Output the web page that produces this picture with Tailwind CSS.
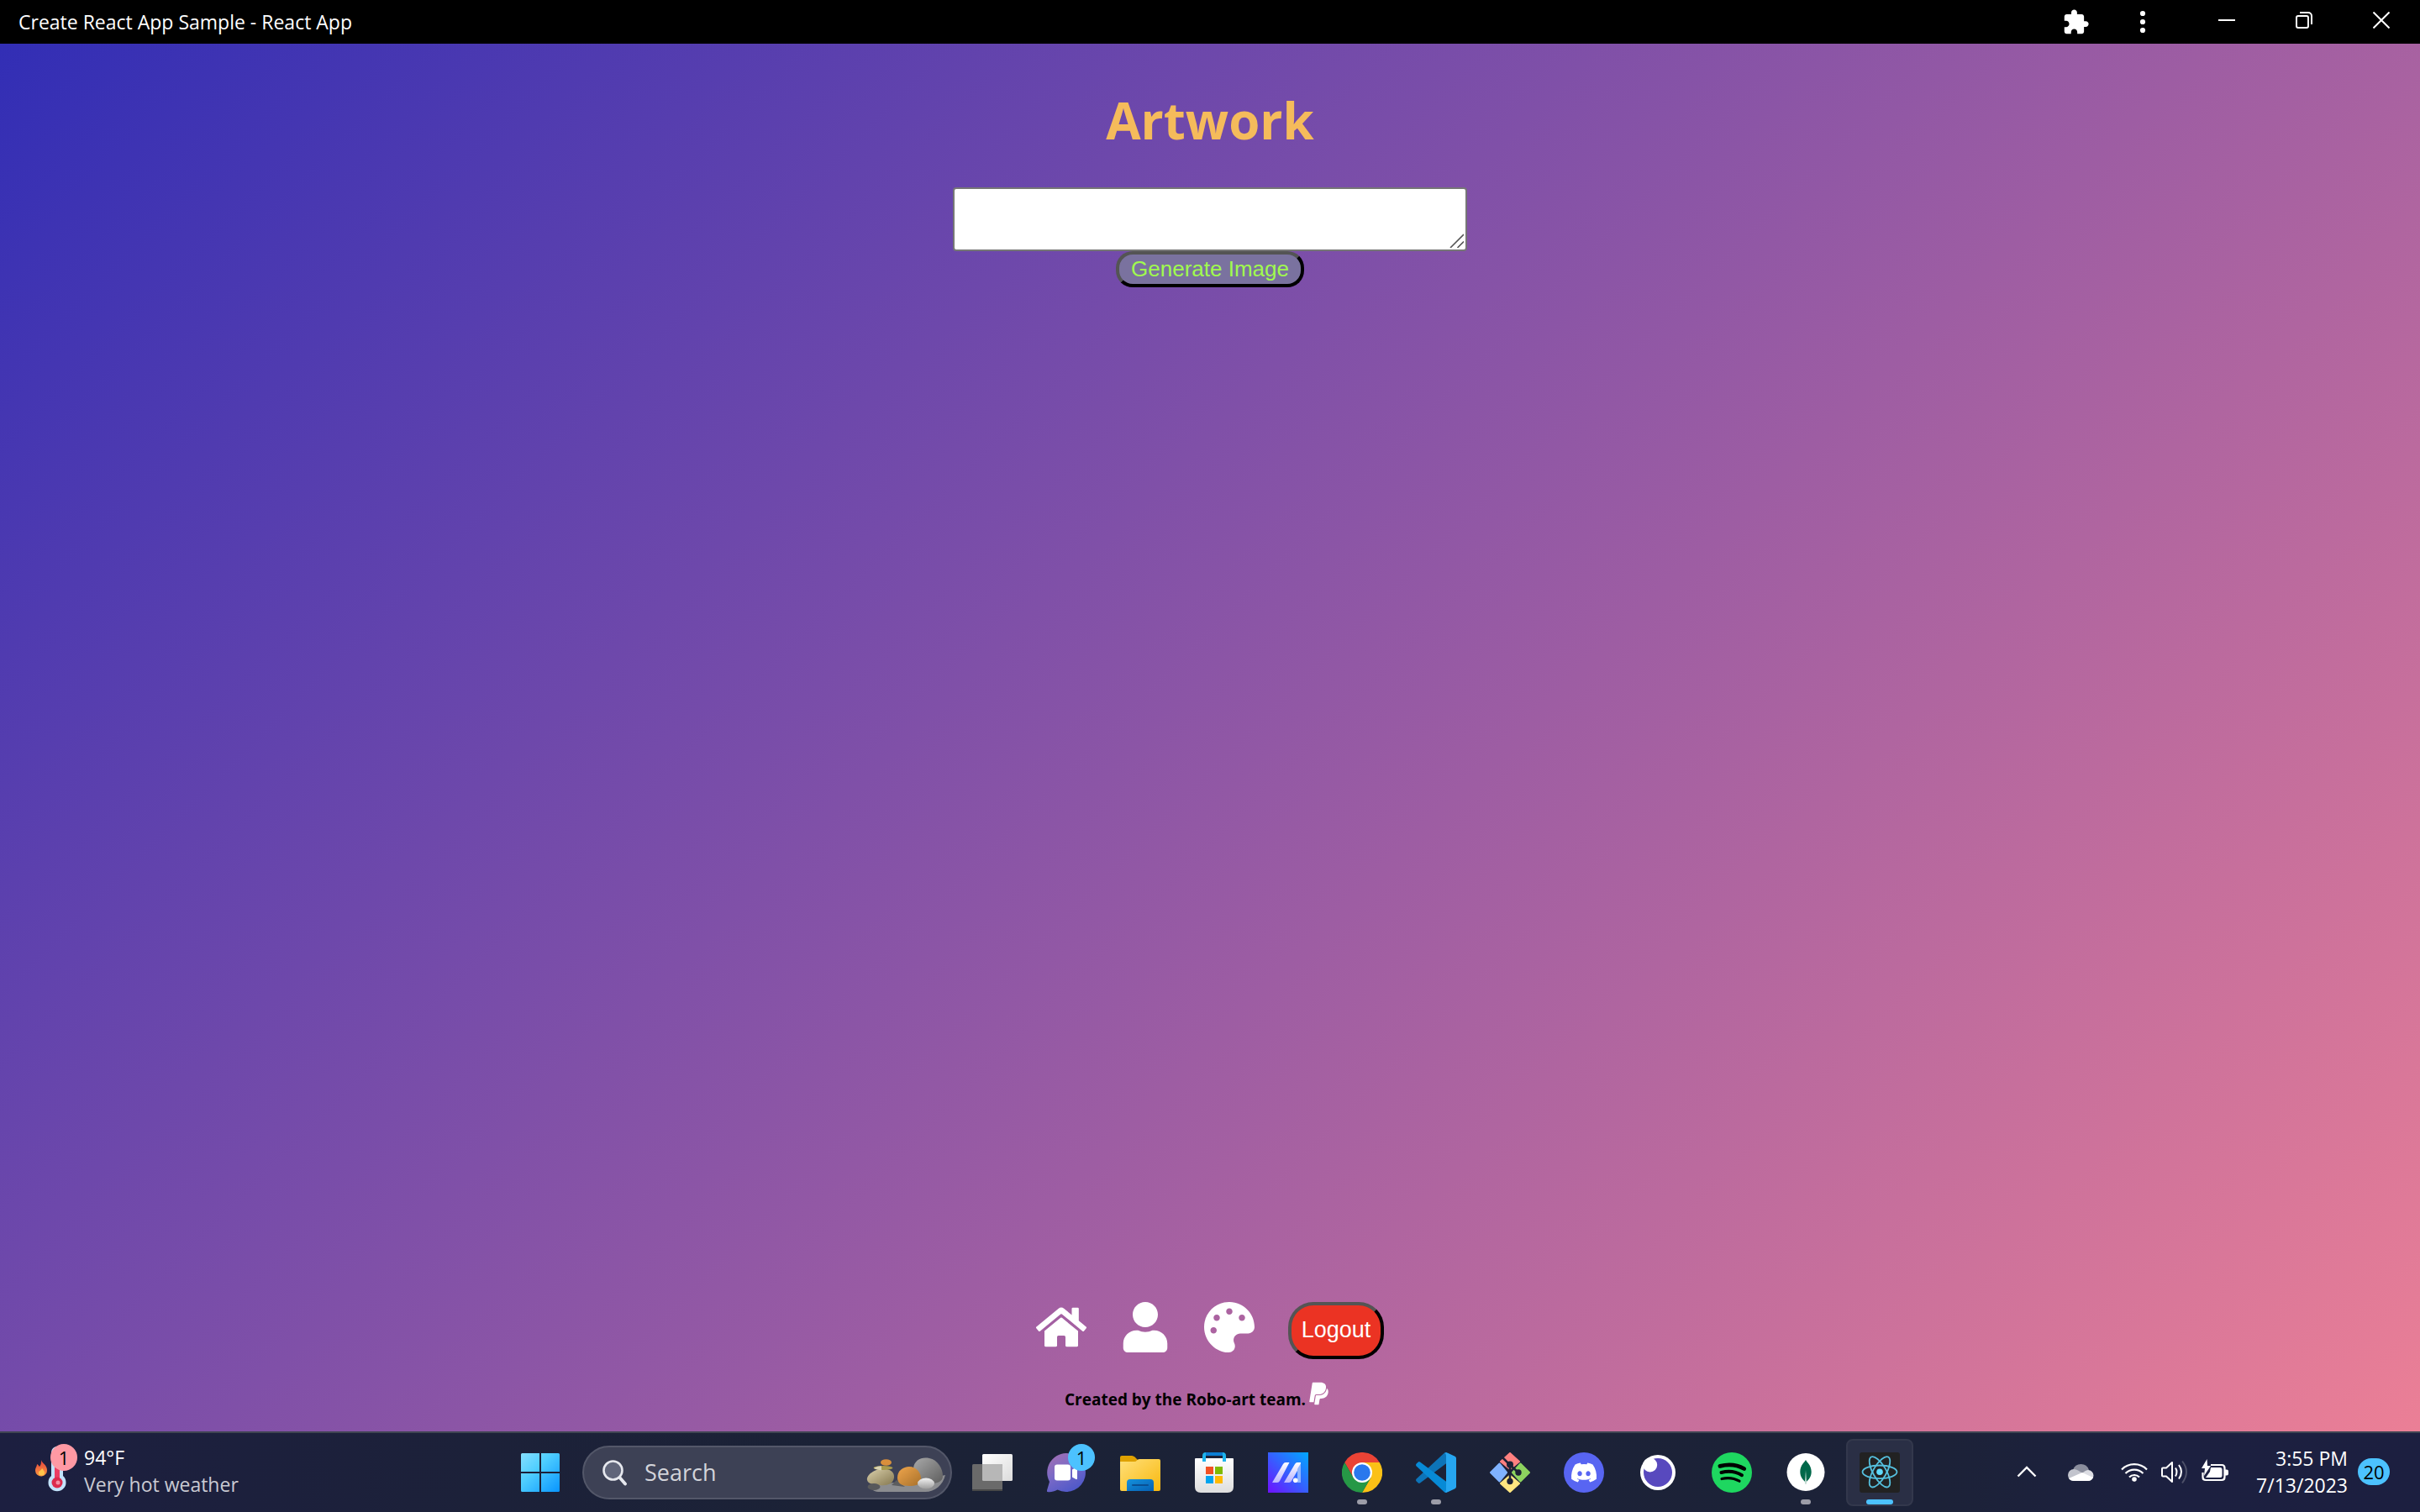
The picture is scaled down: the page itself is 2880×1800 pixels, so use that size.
<!DOCTYPE html>
<html lang="en">
<head>
<meta charset="utf-8">
<meta name="viewport" content="width=device-width, initial-scale=1">
<title>Create React App Sample - React App</title>
<script src="https://cdn.jsdelivr.net/npm/@tailwindcss/browser@4"></script>
</head>
<body class="flex min-h-screen flex-col bg-black font-['Open_Sans','Noto_Sans',sans-serif]">

<!-- Window title bar -->
<header class="flex h-[52px] shrink-0 items-center justify-between bg-black pl-[22px] text-white">
  <span class="text-[23px] leading-8">Create React App Sample - React App</span>
  <div class="flex h-full items-stretch">
    <button aria-label="Extensions" class="flex w-20 items-center justify-center">
      <svg class="size-[33px]" viewBox="0 0 24 24" fill="currentColor"><path d="M20.500 11H19V7c0-1.100-.9-2-2-2h-4V3.500C13 2.120 11.880 1 10.500 1S8 2.120 8 3.500V5H4c-1.100 0-1.990.9-1.990 2v3.800H3.500c1.490 0 2.700 1.210 2.700 2.700s-1.210 2.700-2.700 2.700H2V20c0 1.100.9 2 2 2h3.800v-1.500c0-1.490 1.210-2.700 2.700-2.700 1.490 0 2.700 1.210 2.700 2.700V22H17c1.100 0 2-.9 2-2v-4h1.500c1.380 0 2.500-1.120 2.500-2.500S21.880 11 20.500 11z"/></svg>
    </button>
    <button aria-label="Menu" class="mr-[14px] flex w-20 items-center justify-center">
      <svg class="h-8 w-2" viewBox="0 0 8 32" fill="currentColor"><circle cx="4" cy="6" r="3.100"/><circle cx="4" cy="16" r="3.100"/><circle cx="4" cy="26" r="3.100"/></svg>
    </button>
    <button aria-label="Minimize" class="flex w-[92px] items-center justify-center pb-1">
      <svg class="size-5" viewBox="0 0 20 20" stroke="currentColor" stroke-width="2"><path d="M0 10h20"/></svg>
    </button>
    <button aria-label="Restore" class="flex w-[92px] items-center justify-center pb-1">
      <svg class="size-5" viewBox="0 0 20 20" fill="none" stroke="currentColor" stroke-width="2"><rect x="1" y="5" width="14" height="14" rx="2"/><path d="M5 1h10a4 4 0 0 1 4 4v10"/></svg>
    </button>
    <button aria-label="Close" class="flex w-[92px] items-center justify-center pb-1">
      <svg class="size-5" viewBox="0 0 20 20" stroke="currentColor" stroke-width="2"><path d="M.5.5l19 19M19.500.5l-19 19"/></svg>
    </button>
  </div>
</header>

<!-- App -->
<main class="flex flex-1 flex-col items-center justify-between bg-[linear-gradient(135deg,#322eb5_0%,#eb7f96_100%)] pt-12 pb-5">
  <section class="flex flex-col items-center">
    <h1 class="text-[60px] leading-[86px] font-bold text-[#f5bb5b]">Artwork</h1>
    <div class="relative mt-[37px] flex">
      <textarea aria-label="Image prompt" class="h-[76px] w-[612px] resize-none rounded-sm border-2 border-[#767676] bg-white p-1 text-[27px] text-black"></textarea>
      <svg class="pointer-events-none absolute right-1 bottom-1 size-5" viewBox="0 0 20 20" fill="none" stroke="#555" stroke-width="1.600"><path d="M4 20L20 4M12.500 20l7.500-7.500"/></svg>
    </div>
    <button class="h-[43px] rounded-[20px] border-4 border-black bg-[#7a729f] px-[14px] pb-[2px] font-['Liberation_Sans',Arial,sans-serif] text-[26px] leading-8 text-[#a0fa4e] [border-style:outset]">Generate Image</button>
  </section>
  <footer class="flex flex-col items-center">
    <nav class="flex items-start gap-10 text-white">
      <a href="#home" aria-label="Home"><svg class="size-[60px]" viewBox="0 0 576 512" fill="currentColor"><path d="M280.370 148.260L96 300.110V464a16 16 0 0 0 16 16l112.060-.29a16 16 0 0 0 15.920-16V368a16 16 0 0 1 16-16h64a16 16 0 0 1 16 16v95.640a16 16 0 0 0 16 16.050L464 480a16 16 0 0 0 16-16V300L295.670 148.260a12.190 12.190 0 0 0-15.300 0zM571.600 251.470L488 182.560V44.050a12 12 0 0 0-12-12h-56a12 12 0 0 0-12 12v72.610L318.470 43a48 48 0 0 0-61 0L4.340 251.470a12 12 0 0 0-1.600 16.900l25.500 31A12 12 0 0 0 45.150 301l235.220-193.740a12.190 12.190 0 0 1 15.300 0L530.900 301a12 12 0 0 0 16.900-1.600l25.500-31a12 12 0 0 0-1.700-16.930z"/></svg></a>
      <a href="#profile" aria-label="Profile"><svg class="size-[60px]" viewBox="0 0 448 512" fill="currentColor"><path d="M224 256c70.700 0 128-57.300 128-128S294.700 0 224 0 96 57.300 96 128s57.300 128 128 128zm89.600 32h-16.700c-22.200 10.200-46.900 16-72.900 16s-50.600-5.800-72.900-16h-16.700C60.200 288 0 348.200 0 422.400V464c0 26.500 21.500 48 48 48h352c26.500 0 48-21.500 48-48v-41.600c0-74.200-60.200-134.400-134.400-134.400z"/></svg></a>
      <a href="#artwork" aria-label="Artwork"><svg class="size-[60px]" viewBox="0 0 512 512" fill="currentColor"><path d="M204.300 5C104.900 24.400 24.800 104.300 5.200 203.400c-37 187 131.700 326.400 258.800 306.700 41.200-6.400 61.400-54.600 42.500-91.700-23.100-45.400 9.900-98.400 60.900-98.400h79.700c35.800 0 64.800-29.600 64.900-65.300C511.500 97.100 368.100-26.900 204.300 5zM96 320c-17.700 0-32-14.300-32-32s14.300-32 32-32 32 14.300 32 32-14.300 32-32 32zm32-128c-17.700 0-32-14.300-32-32s14.300-32 32-32 32 14.300 32 32-14.300 32-32 32zm128-64c-17.700 0-32-14.300-32-32s14.300-32 32-32 32 14.300 32 32-14.300 32-32 32zm128 64c-17.700 0-32-14.300-32-32s14.300-32 32-32 32 14.300 32 32-14.300 32-32 32z"/></svg></a>
      <button class="h-[68px] rounded-[30px] border-4 border-black bg-[#eb3323] px-3 pb-[2px] font-['Liberation_Sans',Arial,sans-serif] text-[27px] leading-8 text-white [border-style:outset]">Logout</button>
    </nav>
    <div class="mt-[26px] flex items-start gap-1 pr-8">
      <p class="pt-1 text-[19px] leading-9 font-bold text-black">Created by the Robo-art team.</p>
      <a href="#paypal" aria-label="PayPal" class="text-white"><svg class="h-[30px] w-[23px]" viewBox="0 0 384 512" fill="currentColor"><path d="M111.400 295.900c-3.500 19.200-17.400 108.700-21.500 134-.3 1.800-1 2.500-3 2.500H12.300c-7.600 0-13.100-6.600-12.100-13.900L58.800 46.600c1.500-9.600 10.100-16.900 20-16.900 152.300 0 165.100-3.700 204 11.400 60.100 23.300 65.600 79.500 44 140.300-21.500 62.600-72.500 89.500-140.100 90.300-43.400.7-69.500-7-75.300 24.200zM357.100 152c-1.800-1.300-2.500-1.800-3 1.300-2 11.400-5.100 22.500-8.800 33.600-39.900 113.800-150.500 103.900-204.500 103.900-6.100 0-10.100 3.300-10.900 9.400-22.600 140.400-27.100 169.700-27.100 169.700-1 7.100 3.500 12.900 10.600 12.900h63.500c8.600 0 15.700-6.300 17.400-14.900.7-5.400-1.100 6.100 14.400-91.300 4.600-22 14.300-19.700 29.300-19.700 71 0 126.400-28.800 142.900-112.300 6.500-34.800 4.600-71.400-23.800-92.600z"/></svg></a>
    </div>
  </footer>
</main>

<!-- Taskbar -->
<div class="grid h-24 shrink-0 grid-cols-[1fr_auto_1fr] items-stretch border-t-2 border-[#404553] bg-[linear-gradient(90deg,#1c1f40_0%,#1c2139_20%,#1b2236_35%,#1c2238_80%,#1c2040_90%,#1c1f40_100%)] text-white">

  <button class="flex items-center gap-3 justify-self-start pb-1 pl-[38px] text-left">
    <span class="relative block h-[60px] w-[50px]">
      <svg class="size-full" viewBox="0 0 50 60">
        <defs><linearGradient id="fl" x1="0" y1="0" x2="0" y2="1"><stop offset="0" stop-color="#e5403e"/><stop offset="1" stop-color="#fb9a3f"/></linearGradient></defs>
        <path d="M11 17c1 4 7 6 7 12a7 7 0 0 1-14 1c0-4 2-5 2-8 2 1 2 2 3 3 2-2 2-5 2-8z" fill="url(#fl)"/><path d="M12 27c2 2 3 4 3 5a3.500 3.500 0 0 1-7 0c0-2 3-2 4-5z" fill="#ffc54a"/>
        <path d="M23 36V8a7 7 0 0 1 14 0v28a10.500 10.500 0 1 1-14 0z" fill="#c3e3fb"/><path d="M27 14h6v30h-6z" fill="#ec3d63"/><circle cx="30" cy="44" r="6.500" fill="#dc2b4d"/><circle cx="31" cy="44" r="2.500" fill="#f58fa4"/>
      </svg>
      <span class="absolute -top-[2px] left-[22px] flex size-8 items-center justify-center rounded-full bg-[#ff99a4] text-[22px] leading-none text-black">1</span>
    </span>
    <span class="text-[23px] leading-8"><span class="block">94°F</span><span class="block text-[#c9cad2]">Very hot weather</span></span>
  </button>

  <div class="flex items-center">
    <button aria-label="Start" class="flex w-[88px] items-center justify-center">
      <svg class="size-[46px]" viewBox="0 0 46 46"><defs><linearGradient id="wn" x1="0" y1="0" x2="46" y2="46" gradientUnits="userSpaceOnUse"><stop offset="0" stop-color="#86e0ff"/><stop offset=".4" stop-color="#4fceff"/><stop offset="1" stop-color="#0895ff"/></linearGradient></defs><path fill="url(#wn)" d="M1.500 0H22v22H0V1.500Q0 0 1.500 0zM24 0h20.500Q46 0 46 1.500V22H24zM0 24h22v22H1.500Q0 46 0 44.500zM24 24h22v20.500q0 1.500-1.500 1.500H24z"/></svg>
    </button>
    <label class="mr-1 ml-[6px] flex h-16 w-[440px] items-center rounded-full border-2 border-[#535769] bg-[#3d4155] pr-1 pl-[22px]">
      <svg class="h-8 w-[30px] shrink-0" viewBox="0 0 30 32" fill="none" stroke="#e6e8ee" stroke-linecap="round"><circle cx="12.500" cy="13.500" r="11" stroke-width="2.600" fill="#60657a"/><path d="M20.500 22l6.500 7.500" stroke-width="3.800"/></svg>
      <input type="text" aria-label="Search" placeholder="Search" class="ml-5 w-0 flex-1 bg-transparent text-[27px] leading-9 text-white outline-none placeholder:text-[#d3d4da]">
      <svg class="mt-2 h-11 w-[96px] shrink-0" viewBox="0 0 96 44">
        <defs>
          <linearGradient id="s1" x1="0" y1="0" x2="1" y2="1"><stop offset="0" stop-color="#a9a9a9"/><stop offset="1" stop-color="#5e5e5e"/></linearGradient>
          <linearGradient id="s2" x1="0" y1="0" x2="1" y2="1"><stop offset="0" stop-color="#efa54c"/><stop offset="1" stop-color="#a8712b"/></linearGradient>
          <linearGradient id="s3" x1="0" y1="0" x2="1" y2="1"><stop offset="0" stop-color="#d9cfaa"/><stop offset="1" stop-color="#857850"/></linearGradient>
          <linearGradient id="s4" x1="0" y1="0" x2="0" y2="1"><stop offset="0" stop-color="#f2f2f2"/><stop offset="1" stop-color="#9c9c9c"/></linearGradient>
        </defs>
        <path d="M6 36c20-8 50-6 88-15-3 12-12 20-24 20H16c-6 0-9-2-10-5z" fill="#8c8d90"/><path d="M30 33l6-6 10 8z" fill="#5c5d5f"/>
        <path d="M56 13C57 3 66-1 75 1c10 2 16 12 16 21 0 8-8 9-16 9-12 0-20-8-19-18z" fill="url(#s1)"/>
        <path d="M37 24c0-8 7-13 14-13 9 0 15 8 14 16-1 6-7 7-14 7-9 0-14-3-14-10z" fill="url(#s2)"/>
        <path d="M1 27c-1-7 10-13 17-13 9-1 16 3 15 10-1 8-9 10-17 9C8 33 2 31 1 27z" fill="url(#s3)"/>
        <ellipse cx="20" cy="12.500" rx="11.500" ry="2.500" fill="#a89a4c"/><path d="M9 12.500q5-2.500 9-2.300v5q-6 0-9-2.700z" fill="#d8d2b2"/>
        <ellipse cx="23.500" cy="6" rx="6.500" ry="3.800" fill="#d98f3c"/>
        <ellipse cx="71" cy="31" rx="10" ry="6.500" fill="url(#s4)"/>
        <ellipse cx="9" cy="35" rx="7.500" ry="4" fill="#58595b"/>
      </svg>
    </label>

    <button aria-label="Task view" class="flex w-[88px] justify-center">
      <svg class="size-12" viewBox="0 0 48 48"><defs><linearGradient id="tv" x1="0" y1="0" x2="1" y2="1"><stop offset="0" stop-color="#fff"/><stop offset="1" stop-color="#dcdcdc"/></linearGradient></defs><rect x="12" y="2" width="36" height="32" rx="1.500" fill="url(#tv)"/><rect y="14" width="36" height="32" rx="1.500" fill="#6a6a6a"/><path d="M12 14h24v20H13.500q-1.500 0-1.500-1.500z" fill="#b7b7b7"/><path d="M0 44h36v.5q0 1.500-1.500 1.500h-33Q0 46 0 44.500z" fill="#484848"/></svg>
    </button>
    <button aria-label="Chat" class="flex w-[88px] justify-center">
      <span class="relative block">
        <svg class="size-12" viewBox="0 0 48 48"><defs><linearGradient id="ch" x1="0" y1="0" x2=".6" y2="1"><stop offset="0" stop-color="#a86fb0"/><stop offset=".5" stop-color="#7b6ac6"/><stop offset="1" stop-color="#5059c9"/></linearGradient></defs><path d="M23.500 1a23 23 0 1 1-10 43.500C9 47 5 47.500 1.500 47c-1-.5-.5-2 0-3.500L4 35A23 23 0 0 1 23.500 1z" fill="url(#ch)"/><rect x="10" y="14.500" width="19" height="19" rx="3" fill="#fff"/><path d="M31 20.500l4.500-2.500q1.500-.5 1.500 1v12q0 1.500-1.500 1L31 29.500z" fill="#fff"/></svg>
        <span class="absolute -top-[10px] left-[26px] flex size-8 items-center justify-center rounded-full bg-[#4cc2ff] text-[22px] leading-none text-black">1</span>
      </span>
    </button>
    <button aria-label="File Explorer" class="flex w-[88px] justify-center">
      <svg class="size-12" viewBox="0 0 48 48"><defs><linearGradient id="fo" x1="0" y1="0" x2="1" y2="1"><stop offset="0" stop-color="#ffe07a"/><stop offset="1" stop-color="#f9b80e"/></linearGradient><linearGradient id="fb" x1="0" y1="0" x2="1" y2="1"><stop offset="0" stop-color="#1592dc"/><stop offset="1" stop-color="#0560b4"/></linearGradient></defs><path d="M0 6q0-2 2-2h12q2 0 3.500 1.500L21 9v8H0z" fill="#dfa100"/><path d="M0 11h17q2 0 3-1.500T23 8h23q2 0 2 2v34q0 2-2 2H2q-2 0-2-2z" fill="url(#fo)"/><path d="M8 46V36q0-4 4-4h24q4 0 4 4v10z" fill="url(#fb)"/><path d="M15 39h18" stroke="#0a4f92" stroke-width="2" stroke-linecap="round"/></svg>
    </button>
    <button aria-label="Microsoft Store" class="flex w-[88px] justify-center">
      <svg class="size-12" viewBox="0 0 48 48"><defs><linearGradient id="st" x1="0" y1="0" x2="0" y2="1"><stop offset="0" stop-color="#fff"/><stop offset="1" stop-color="#dedede"/></linearGradient></defs><path d="M1 8q0-1 1-1h44q1 0 1 1v33q0 7-7 7H8q-7 0-7-7z" fill="url(#st)"/><path d="M12 11V4q0-2 2-2h20q2 0 2 2v7" fill="none" stroke="#1eb4ec" stroke-width="4"/><path d="M14 2h20" stroke="#0c7fd4" stroke-width="4"/><path fill="#f25022" d="M14 17h9v9h-9z"/><path fill="#7fba00" d="M25 17h9v9h-9z"/><path fill="#00a4ef" d="M14 28h9v9h-9z"/><path fill="#ffb900" d="M25 28h9v9h-9z"/></svg>
    </button>
    <button aria-label="MyASUS" class="flex w-[88px] justify-center">
      <svg class="size-12" viewBox="0 0 48 48"><defs><linearGradient id="ma" x1="0" y1="1" x2="1" y2="0"><stop offset="0" stop-color="#7010ff"/><stop offset=".5" stop-color="#3560ff"/><stop offset="1" stop-color="#00a8ff"/></linearGradient><linearGradient id="mb" x1="0" y1="0" x2="0" y2="1"><stop offset="0" stop-color="#fff"/><stop offset="1" stop-color="#b9b2ff"/></linearGradient></defs><path fill="url(#ma)" d="M0 0h48v48H0z"/><path d="M5 36l13-22q1-2 3-2h4.500L14 34q-1 2-3 2zM19 36l13-22q1-2 3-2h4v3L28 34q-1 2-3 2z" fill="url(#mb)"/><path d="M35 20l4-7v23h-4z" fill="#8fb5ff"/><circle cx="32.700" cy="33.300" r="2.800" fill="#fff"/></svg>
    </button>
    <button aria-label="Google Chrome" class="flex w-[88px] justify-center">
      <span class="relative block"><svg class="size-12" viewBox="0 0 48 48"><path fill="#ea4335" d="M3.200 12A24 24 0 0 1 44.800 12H24L13.600 30z"/><path fill="#fbc116" d="M44.800 12A24 24 0 0 1 24 48l10.400-18L24 12z"/><path fill="#269846" d="M3.200 12A24 24 0 0 0 24 48l10.400-18H13.600z"/><circle cx="24" cy="24" r="12" fill="#fff"/><circle cx="24" cy="24" r="9.800" fill="#2a78ed"/></svg><span class="absolute top-14 left-[18px] h-[6px] w-3 rounded-full bg-[#9c9da8]"></span></span>
    </button>
    <button aria-label="Visual Studio Code" class="flex w-[88px] justify-center">
      <span class="relative block"><svg class="size-12" viewBox="0 0 48 48"><path fill="#0d74b8" d="M.7 34.500q-1.400-1.400 0-3L33.500 1Q35 0 37 0v12.500L5 36.500q-1.200.8-2.200 0z"/><path fill="#078ad6" d="M.7 13.500q-1.400 1.400 0 3L33.500 47q1.500 1 3.500 1V35.500L5 11.500q-1.200-.8-2.200 0z"/><path fill="#26a6f0" d="M34 47.300q2 .7 4 0l8.500-4Q48 42.500 48 41V7q0-1.500-1.500-2.300L38 .7q-2-.9-4 0 2 .3 2 3v41q0 2-2 2.600z"/></svg><span class="absolute top-14 left-[18px] h-[6px] w-3 rounded-full bg-[#9c9da8]"></span></span>
    </button>
    <button aria-label="Git" class="flex w-[88px] justify-center">
      <svg class="size-12" viewBox="0 0 48 48"><g stroke-width="2" stroke-linejoin="round"><path fill="#ff8080" stroke="#ff8080" d="M24 1l11 10-11 9-11-9z"/><path fill="#80b3ff" stroke="#80b3ff" d="M1 24l10.500-10.500L20 24l-8.500 10.500z"/><path fill="#8dd35f" stroke="#8dd35f" d="M47 24L36.500 13.500 27 24l9.500 10.500z"/><path fill="#ffe680" stroke="#ffe680" d="M24 47L13 37l11-9.500L35 37z"/></g><g fill="none" stroke="#1c2136" stroke-width="2.600"><path d="M15 6l9 9v19M24 15l10 9"/></g><g fill="#1c2136"><circle cx="24" cy="14.500" r="4"/><circle cx="24" cy="34.500" r="3.700"/><circle cx="34" cy="24" r="3.700"/></g></svg>
    </button>
    <button aria-label="Discord" class="flex w-[88px] justify-center">
      <svg class="size-12" viewBox="0 0 48 48"><circle cx="24" cy="24" r="24" fill="#5865f2"/><path transform="translate(9 9) scale(1.880)" fill="#fff" d="M13.545 2.907a13.200 13.200 0 0 0-3.257-1.011.05.05 0 0 0-.052.025c-.141.25-.297.577-.406.833a12.200 12.200 0 0 0-3.658 0 8 8 0 0 0-.412-.833.05.05 0 0 0-.052-.025c-1.125.194-2.220.534-3.257 1.011a.04.04 0 0 0-.021.018C.356 6.024-.213 9.047.066 12.032q.003.022.021.037a13.300 13.300 0 0 0 3.995 2.020.05.05 0 0 0 .056-.019q.463-.63.818-1.329a.05.05 0 0 0-.01-.059l-.018-.011a9 9 0 0 1-1.248-.595.05.05 0 0 1-.02-.066l.015-.019q.127-.095.248-.195a.05.05 0 0 1 .051-.007c2.619 1.196 5.454 1.196 8.041 0a.05.05 0 0 1 .053.007q.121.1.248.195a.05.05 0 0 1-.004.085 8 8 0 0 1-1.249.594.05.05 0 0 0-.03.03.05.05 0 0 0 .003.041c.24.465.515.909.817 1.329a.05.05 0 0 0 .056.019 13.200 13.200 0 0 0 4.001-2.020.05.05 0 0 0 .021-.037c.334-3.451-.559-6.449-2.366-9.106a.03.03 0 0 0-.02-.019m-8.198 7.307c-.789 0-1.438-.724-1.438-1.612s.637-1.613 1.438-1.613c.807 0 1.450.73 1.438 1.613 0 .888-.637 1.612-1.438 1.612m5.316 0c-.788 0-1.438-.724-1.438-1.612s.637-1.613 1.438-1.613c.807 0 1.451.73 1.438 1.613 0 .888-.631 1.612-1.438 1.612"/></svg>
    </button>
    <button aria-label="Insomnia" class="flex w-[88px] justify-center">
      <svg class="size-12" viewBox="0 0 48 48"><circle cx="24" cy="24" r="21" fill="#fff"/><circle cx="24" cy="24" r="17" fill="#5849be"/><circle cx="14.700" cy="15" r="8.500" fill="#fff"/></svg>
    </button>
    <button aria-label="Spotify" class="flex w-[88px] justify-center">
      <svg class="size-12" viewBox="0 0 48 48" stroke="#000" stroke-linecap="round" fill="none"><circle cx="24" cy="24" r="24" fill="#1ed760" stroke="none"/><path stroke-width="4.800" d="M10 16.300q16-4 28.700 3.200"/><path stroke-width="4" d="M11.500 24q13.500-3.500 24.500 3.200"/><path stroke-width="3.200" d="M12 31.500q11.500-2.700 21 2.700"/></svg>
    </button>
    <button aria-label="MongoDB Compass" class="flex w-[88px] justify-center">
      <span class="relative block"><svg class="size-12" viewBox="0 0 48 48"><circle cx="24" cy="23.500" r="22.500" fill="#fff"/><path fill="#00684a" d="M24 9c.5 2 6.700 6 6.700 14 0 6-3.200 10-6.700 12.500-3.500-2.500-6.700-6.500-6.700-12.500 0-8 6-12 6.700-14z"/><path fill="#b9d6cc" d="M24 21l1 14-.5 3h-1l-.5-3z"/></svg><span class="absolute top-14 left-[18px] h-[6px] w-3 rounded-full bg-[#9c9da8]"></span></span>
    </button>
    <button aria-label="React App" class="mx-1 flex size-20 items-center justify-center rounded-lg border-2 border-[#33384c] bg-[#2a2f45]">
      <span class="relative block"><svg class="size-12" viewBox="0 0 48 48"><rect width="48" height="48" rx="3" fill="#222"/><g fill="none" stroke="#55c0de" stroke-width="1.800"><ellipse cx="24" cy="23.300" rx="20.500" ry="7.800"/><ellipse cx="24" cy="23.300" rx="20.500" ry="7.800" transform="rotate(60 24 23.300)"/><ellipse cx="24" cy="23.300" rx="20.500" ry="7.800" transform="rotate(120 24 23.300)"/></g><circle cx="24" cy="23.300" r="3.800" fill="#61dafb"/></svg><span class="absolute top-14 left-2 h-[6px] w-8 rounded-full bg-[#4cc2ff]"></span></span>
    </button>
  </div>

  <div class="flex items-center justify-self-end pr-9 pb-[2px]">
    <button aria-label="Show hidden icons" class="mr-9"><svg class="h-4 w-6" viewBox="0 0 24 16" fill="none" stroke="#fff" stroke-width="2.400"><path d="M1.500 13.500L12 3l10.500 10.500"/></svg></button>
    <button aria-label="OneDrive" class="mr-8"><svg class="h-6 w-8" viewBox="0 0 32 24"><path d="M7 10a10 10 0 0 1 19 0l-6 8H7z" fill="#8b8e9d"/><path d="M8 9q3 0 5 1.500L24 17l-12 6H8A7 7 0 0 1 8 9z" fill="#c2c4cd"/><path d="M25 10a6.500 6.500 0 0 1 0 13l-13-5 9-6.500q2-1.500 4-1.500z" fill="#dcdde3"/><path d="M2 20l16-7 13 6q-2 4-6 4H8q-4 0-6-3z" fill="#fff"/></svg></button>
    <button aria-label="Network, volume and battery" class="mr-[33px] flex items-center gap-4">
      <svg class="size-8" viewBox="0 0 32 32" fill="none" stroke="#fff" stroke-width="2.200"><path d="M1 13.500a21 21 0 0 1 30 0M5.500 18a14.800 14.800 0 0 1 21 0M10 22.500a8.500 8.500 0 0 1 12 0"/><circle cx="16" cy="25" r="2.800" fill="#fff" stroke="none"/></svg>
      <svg class="size-8" viewBox="0 0 32 32" fill="none" stroke="#fff" stroke-width="2"><path d="M1 12.500q0-1 1-1h4l7-6.500v23L6 21.500H2q-1 0-1-1z" stroke-linejoin="round"/><path d="M17 11.500q3 4.500 0 10M21 8q6 8 0 16.500"/><path d="M25 3.500q10 12.500 0 26" stroke="#4d5068"/></svg>
      <svg class="size-8" viewBox="0 0 32 32"><path d="M11 8h13q3.500 0 3.500 3.500v11q0 3.500-3.500 3.500H5q-3.500 0-3.500-3.500V17" fill="none" stroke="#fff" stroke-width="2.200"/><path d="M11 11h11q2.500 0 2.500 2.500v7q0 2.500-2.500 2.500H5l5-7z" fill="#fff"/><path d="M28 13.500h2q2 0 2 2v3q0 2-2 2h-2z" fill="#fff"/><path d="M6.500 1L0 12h4l-1 9 8-12H7z" fill="#fff"/></svg>
    </button>
    <button class="flex items-center gap-3 text-right text-[23px] leading-8">
      <span><span class="block">3:55 PM</span><span class="block">7/13/2023</span></span>
      <span class="flex h-8 w-[38px] items-center justify-center rounded-full bg-[#4cc2ff] text-[22px] text-black">20</span>
    </button>
  </div>
</div>
</body>
</html>
